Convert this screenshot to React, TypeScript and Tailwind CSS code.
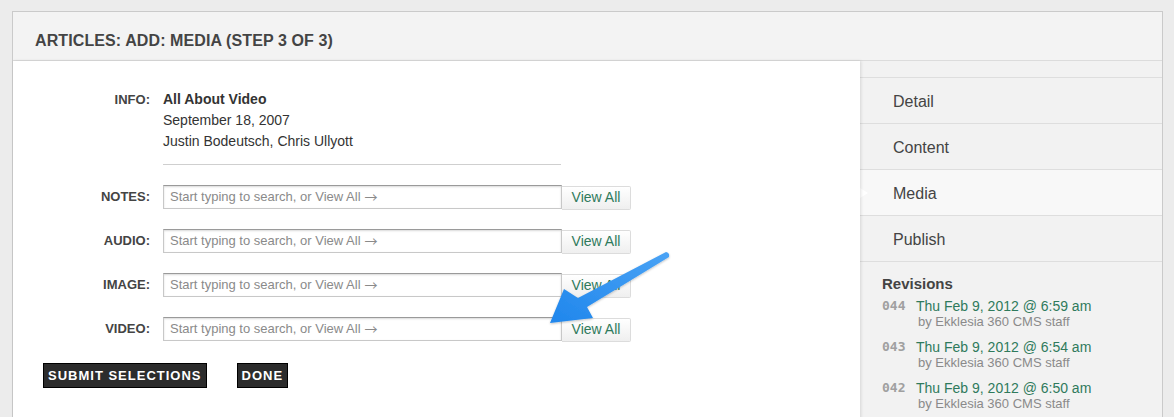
import React from "react";

const fieldRows = ["NOTES:", "AUDIO:", "IMAGE:", "VIDEO:"];

const revisions = [
  { num: "044", date: "Thu Feb 9, 2012 @ 6:59 am" },
  { num: "043", date: "Thu Feb 9, 2012 @ 6:54 am" },
  { num: "042", date: "Thu Feb 9, 2012 @ 6:50 am" },
];

const navItems = ["Detail", "Content", "Media", "Publish"];

function SearchRow({ label }: { label: string }) {
  return (
    <div className="flex items-center h-[24px]">
      <div className="w-[137px] text-right text-[13px] font-bold text-[#444]">{label}</div>
      <div className="ml-[13px] flex items-start">
        <div className="w-[399px] h-[24px] border border-[#c8c8c8] border-t-[#9a9a9a] bg-white shadow-[inset_0_1px_2px_rgba(0,0,0,0.15)] flex items-center pl-[6px] text-[13px] text-[#8a8a8a]">
          Start typing to search, or View All
          <span className="ml-[4px]" style={{ fontFamily: '"Noto Sans CJK JP", sans-serif' }}>
            →
          </span>
        </div>
        <div className="mt-[1px] w-[69px] h-[24px] border border-[#dcdcdc] border-l-0 rounded-r-[2px] bg-gradient-to-b from-[#ffffff] to-[#efefef] flex items-center justify-center text-[14px] text-[#2f7a5c]">
          View All
        </div>
      </div>
    </div>
  );
}

function Arrow() {
  return (
    <svg
      className="absolute left-0 top-0 z-20 pointer-events-none"
      width="1174"
      height="417"
      viewBox="0 0 1174 417"
    >
      <defs>
        <linearGradient id="arrowFill" x1="1" y1="0" x2="0" y2="1">
          <stop offset="0" stopColor="#4aa3f5" />
          <stop offset="1" stopColor="#1f86ec" />
        </linearGradient>
        <filter id="arrowShadow" x="-10%" y="-10%" width="130%" height="130%">
          <feDropShadow dx="0" dy="1" stdDeviation="1" floodColor="#000" floodOpacity="0.25" />
        </filter>
      </defs>
      <path
        d="M666 252 Q670 253 669 257 L587 307 L593 318 L550 323 L564 289 L578 298 Z"
        fill="url(#arrowFill)"
        filter="url(#arrowShadow)"
      />
    </svg>
  );
}

export default function App() {
  return (
    <div
      className="relative w-[1174px] h-[417px] overflow-hidden bg-[#ececec] pt-[11px] pl-[12px]"
      style={{ fontFamily: '"Liberation Sans", Arial, sans-serif' }}
    >
      <div className="w-[1151px] h-[420px] border border-[#cacaca] bg-[#f2f2f2] flex flex-col">
        {/* header */}
        <div className="h-[49px] shrink-0 bg-[#f3f3f3] border-b border-[#dcdcdc] px-[22px] pt-[19px]">
          <h1 className="text-[16px] leading-[19px] font-bold text-[#444] tracking-[0.1px]">ARTICLES: ADD: MEDIA (STEP 3 OF 3)</h1>
        </div>

        <div className="flex flex-1">
          {/* main form */}
          <div className="w-[847px] shrink-0 bg-white shadow-[1px_0_3px_rgba(0,0,0,0.12)] relative z-10 pt-[28px]">
            <div className="flex">
              <div className="w-[137px] text-right text-[13px] font-bold text-[#444] leading-[21px]">INFO:</div>
              <div className="ml-[13px] text-[14px] leading-[21px] text-[#333]">
                <div className="font-bold">All About Video</div>
                <div>September 18, 2007</div>
                <div>Justin Bodeutsch, Chris Ullyott</div>
              </div>
            </div>
            <div className="ml-[150px] mt-[12px] w-[398px] border-t border-[#cfcfcf]" />

            <div className="mt-[20px] flex flex-col gap-[20px]">
              {fieldRows.map((r) => (
                <SearchRow key={r} label={r} />
              ))}
            </div>

            <div className="mt-[22px] ml-[30px] flex gap-[30px]">
              <button className="h-[25px] px-[4px] bg-[#2c2c2c] border border-black text-white text-[13px] font-bold tracking-[1px]">
                SUBMIT SELECTIONS
              </button>
              <button className="h-[25px] px-[4px] bg-[#2c2c2c] border border-black text-white text-[13px] font-bold tracking-[1px]">
                DONE
              </button>
            </div>
          </div>

          {/* side nav */}
          <div className="flex-1 bg-[#f2f2f2]">
            <div className="h-[17px] border-b border-[#dedede]" />
            {navItems.map((item) => (
              <div
                key={item}
                className={
                  item === "Media"
                    ? "relative h-[46px] border-b border-[#dedede] bg-[#f8f8f8] flex items-center pl-[33px] pt-[3px] text-[16px] text-[#444]"
                    : "h-[46px] border-b border-[#dedede] flex items-center pl-[33px] pt-[3px] text-[16px] text-[#444]"
                }
              >
                {item === "Media" && (
                  <span className="absolute left-0 top-[18px] w-0 h-0 border-y-[5px] border-y-transparent border-l-[8px] border-l-white" />
                )}
                {item}
              </div>
            ))}

            <div className="pl-[22px] pt-[13px]">
              <div className="text-[15px] font-bold text-[#444] leading-[18px]">Revisions</div>
              <div className="mt-[5px] flex flex-col gap-[9px]">
                {revisions.map((rev) => (
                  <div key={rev.num} className="flex">
                    <div
                      className="w-[34px] text-[13px] font-bold text-[#a0a0a0] leading-[16px]"
                      style={{ fontFamily: '"DejaVu Sans Mono", monospace' }}
                    >
                      {rev.num}
                    </div>
                    <div>
                      <div className="text-[14px] leading-[16px] text-[#2f7a5c]">{rev.date}</div>
                      <div className="pl-[2px] text-[13px] leading-[16px] text-[#8a8a8a]">by Ekklesia 360 CMS staff</div>
                    </div>
                  </div>
                ))}
              </div>
            </div>
          </div>
        </div>
      </div>
      <Arrow />
    </div>
  );
}
